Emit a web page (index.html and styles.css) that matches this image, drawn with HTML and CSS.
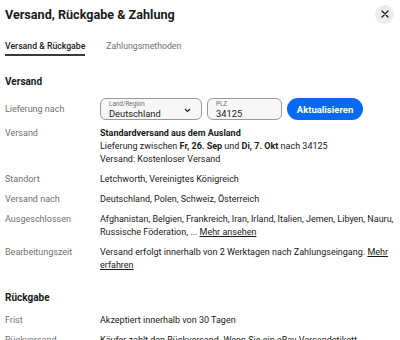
FILE: index.html
```html
<!DOCTYPE html>
<html lang="de">
<head>
    <meta charset="UTF-8">
    <meta name="viewport" content="width=device-width, initial-scale=1.0">
    <title>Versand, Rückgabe & Zahlung</title>
    <link rel="stylesheet" href="styles.css">
</head>
<body>
    <div class="dialog">
        <div class="dialog-head">
            <h2>Versand, Rückgabe &amp; Zahlung</h2>
            <button class="close" aria-label="Schließen">
                <svg width="8" height="8" viewBox="0 0 8 8"><path d="M1 1L7 7M7 1L1 7" stroke="#191919" stroke-width="1.3" stroke-linecap="round"/></svg>
            </button>
        </div>

        <div class="tabs">
            <span class="tab active">Versand &amp; Rückgabe</span>
            <span class="tab">Zahlungsmethoden</span>
        </div>

        <div class="section">
            <h3>Versand</h3>

            <div class="row row-form">
                <div class="label">Lieferung nach</div>
                <div class="value form">
                    <div class="field field-select">
                        <span class="field-label">Land/Region</span>
                        <span class="field-value">Deutschland</span>
                        <svg class="chevron" width="7" height="5" viewBox="0 0 7 5"><path d="M1 1L3.5 3.5L6 1" fill="none" stroke="#191919" stroke-width="1.1"/></svg>
                    </div>
                    <div class="field field-zip">
                        <span class="field-label">PLZ</span>
                        <span class="field-value">34125</span>
                    </div>
                    <button class="btn-primary">Aktualisieren</button>
                </div>
            </div>

            <div class="row">
                <div class="label">Versand</div>
                <div class="value">
                    <b>Standardversand aus dem Ausland</b><br>
                    Lieferung zwischen <b>Fr, 26. Sep</b> und <b>Di, 7. Okt</b> nach 34125<br>
                    Versand: Kostenloser Versand
                </div>
            </div>

            <div class="row">
                <div class="label">Standort</div>
                <div class="value">Letchworth, Vereinigtes Königreich</div>
            </div>

            <div class="row">
                <div class="label">Versand nach</div>
                <div class="value">Deutschland, Polen, Schweiz, Österreich</div>
            </div>

            <div class="row">
                <div class="label">Ausgeschlossen</div>
                <div class="value">Afghanistan, Belgien, Frankreich, Iran, Irland, Italien, Jemen, Libyen, Nauru, Russische Föderation, ... <a href="#">Mehr ansehen</a></div>
            </div>

            <div class="row">
                <div class="label">Bearbeitungszeit</div>
                <div class="value">Versand erfolgt innerhalb von 2 Werktagen nach Zahlungseingang. <a href="#">Mehr erfahren</a></div>
            </div>
        </div>

        <div class="section">
            <h3>Rückgabe</h3>

            <div class="row">
                <div class="label">Frist</div>
                <div class="value">Akzeptiert innerhalb von 30 Tagen</div>
            </div>

            <div class="row">
                <div class="label">Rückversand</div>
                <div class="value">Käufer zahlt den Rückversand. Wenn Sie ein eBay-Versandetikett verwenden, werden die Kosten von Ihrer Rückerstattung abgezogen.</div>
            </div>
        </div>
    </div>
</body>
</html>
```

FILE: styles.css
```css
html, body {
    margin: 0;
    padding: 0;
    height: 340px;
    overflow: hidden;
}
body {
    font-family: Roboto, "Liberation Sans", Arial, sans-serif;
    font-size: 9px;
    color: #191919;
    background: #fff;
}
.dialog {
    padding: 0 6px 0 5px;
}
.dialog-head {
    display: flex;
    align-items: center;
    justify-content: space-between;
    height: 28px;
}
.dialog-head h2 {
    margin: 0;
    font-size: 12.6px;
    font-weight: 700;
}
.close {
    width: 19px;
    height: 19px;
    border-radius: 50%;
    border: none;
    background: #ececec;
    padding: 0;
    display: flex;
    align-items: center;
    justify-content: center;
}
.tabs {
    display: flex;
    gap: 21px;
    margin-top: 12px;
}
.tab {
    font-size: 8.7px;
    line-height: 12px;
    padding-bottom: 2px;
    border-bottom: 2px solid transparent;
    color: #707070;
}
.tab.active {
    color: #191919;
    font-weight: 500;
    border-bottom-color: #3a3a3a;
}
.section {
    margin-top: 18px;
}
.section h3 {
    margin: 0 0 9px;
    font-size: 10px;
    line-height: 15px;
    font-weight: 700;
}
.row {
    display: grid;
    grid-template-columns: 95px 1fr;
    line-height: 13px;
    margin-bottom: 7px;
}
.label {
    color: #707070;
}
.value b {
    font-weight: 700;
}
.value a {
    color: #191919;
}
.row-form {
    align-items: center;
}
.form {
    display: flex;
    gap: 5px;
    height: 22px;
}
.field {
    box-sizing: border-box;
    height: 22px;
    border: 1px solid #9a9a9a;
    border-radius: 6px;
    background: #f7f7f7;
    padding: 1px 8px 0;
    display: flex;
    flex-direction: column;
    justify-content: center;
    position: relative;
}
.field-select {
    width: 102px;
}
.field-zip {
    width: 75px;
}
.field-label {
    font-size: 6.3px;
    line-height: 7px;
    color: #707070;
}
.field-value {
    font-size: 9.3px;
    line-height: 11px;
}
.chevron {
    position: absolute;
    right: 10px;
    top: 9px;
}
.btn-primary {
    height: 22px;
    width: 76px;
    border: none;
    border-radius: 11px;
    background: #0968f6;
    color: #fff;
    font-family: inherit;
    font-size: 9.5px;
    font-weight: 700;
    padding: 0;
}
```
